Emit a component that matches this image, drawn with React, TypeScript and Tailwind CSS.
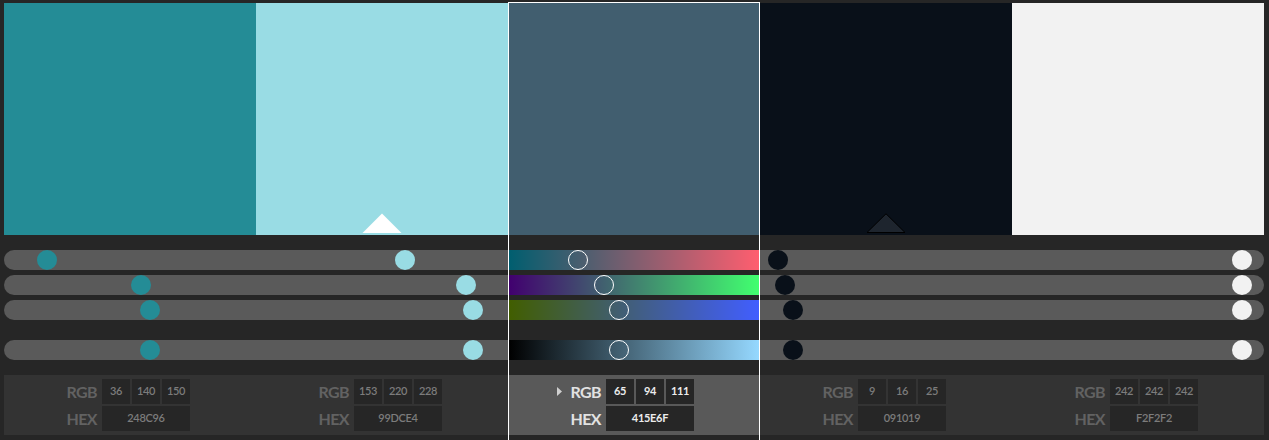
import React from "react";

type Swatch = {
  r: number;
  g: number;
  b: number;
  hex: string;
  mark?: "light" | "dark";
};

const swatches: Swatch[] = [
  { r: 36, g: 140, b: 150, hex: "248C96" },
  { r: 153, g: 220, b: 228, hex: "99DCE4", mark: "light" },
  { r: 65, g: 94, b: 111, hex: "415E6F" },
  { r: 9, g: 16, b: 25, hex: "091019", mark: "dark" },
  { r: 242, g: 242, b: 242, hex: "F2F2F2" },
];

const SELECTED = 2;

const rgb = (r: number, g: number, b: number) => `rgb(${r},${g},${b})`;

function Track({
  value,
  width,
  color,
  selected,
  gradient,
  rounded,
}: {
  value: number;
  width: number;
  color: string;
  selected: boolean;
  gradient: string;
  rounded: string;
}) {
  const left = (value / 255) * (width - 20);
  return (
    <div
      className={`relative h-5 w-full ${selected ? "" : "bg-[#5a5a5a]"} ${rounded}`}
      style={selected ? { background: gradient } : undefined}
    >
      <div
        className={`absolute top-0 h-5 w-5 rounded-full ${
          selected ? "border-[1.5px] border-white" : ""
        }`}
        style={{ left, background: selected ? "transparent" : color }}
      />
    </div>
  );
}

function Column({ s, index }: { s: Swatch; index: number }) {
  const selected = index === SELECTED;
  const width = selected ? 250 : 252;
  const color = rgb(s.r, s.g, s.b);
  const max = Math.max(s.r, s.g, s.b);
  const k = 255 / (max || 1);
  const rounded =
    index === 0 ? "rounded-l-full" : index === swatches.length - 1 ? "rounded-r-full" : "";

  const rows = [
    { v: s.r, g: `linear-gradient(to right, ${rgb(0, s.g, s.b)}, ${rgb(255, s.g, s.b)})` },
    { v: s.g, g: `linear-gradient(to right, ${rgb(s.r, 0, s.b)}, ${rgb(s.r, 255, s.b)})` },
    { v: s.b, g: `linear-gradient(to right, ${rgb(s.r, s.g, 0)}, ${rgb(s.r, s.g, 255)})` },
  ];
  const valueGradient = `linear-gradient(to right, #000, ${rgb(
    Math.round(s.r * k),
    Math.round(s.g * k),
    Math.round(s.b * k)
  )})`;

  const label = selected ? "text-[#e2e2e2]" : "text-[#626262]";
  const box = selected ? "text-[#ececec] font-bold" : "text-[#7c7c7c] font-semibold";

  return (
    <div className={`relative flex w-[252px] flex-col ${selected ? "px-px" : ""}`}>
      <div className="relative h-[232px]" style={{ background: color }}>
        {s.mark && (
          <svg
            className="absolute bottom-[2px] left-1/2 -translate-x-1/2"
            width="40"
            height="20"
            viewBox="0 0 40 20"
          >
            {s.mark === "light" ? (
              <polygon points="20,0.5 39.5,20 0.5,20" fill="#ffffff" />
            ) : (
              <polygon points="20,0.8 39,19.5 1,19.5" fill="#1e252e" stroke="#000" strokeWidth="1" />
            )}
          </svg>
        )}
      </div>

      <div className="mt-[15px] flex flex-col gap-[5px]">
        {rows.map((r, i) => (
          <Track
            key={i}
            value={r.v}
            width={width}
            color={color}
            selected={selected}
            gradient={r.g}
            rounded={rounded}
          />
        ))}
      </div>
      <div className="mt-5">
        <Track
          value={max}
          width={width}
          color={color}
          selected={selected}
          gradient={valueGradient}
          rounded={rounded}
        />
      </div>

      <div
        className={`mt-[15px] flex h-[60px] flex-col gap-[2px] pt-1 ${
          selected ? "bg-[#595959] pl-[46px]" : "bg-[#333333] pl-[47px]"
        }`}
      >
        <div className="flex h-[25px] items-center">
          <div className="flex w-[10px] items-center pl-[2px]">
            {selected && (
              <svg width="5" height="9" viewBox="0 0 5 9">
                <polygon points="0,0 5,4.5 0,9" fill="#cfcfcf" />
              </svg>
            )}
          </div>
          <span className={`w-[36px] text-right text-[16px] font-bold tracking-[-0.6px] ${label}`}>
            RGB
          </span>
          <div className="ml-[5px] flex gap-[2px]">
            {[s.r, s.g, s.b].map((v, i) => (
              <div
                key={i}
                className={`flex h-[25px] w-7 items-center justify-center bg-[#262626] text-[11px] tracking-[-0.3px] ${box}`}
              >
                {v}
              </div>
            ))}
          </div>
        </div>
        <div className="flex h-[25px] items-center">
          <div className="w-[10px]" />
          <span className={`w-[36px] text-right text-[16px] font-bold tracking-[-0.6px] ${label}`}>
            HEX
          </span>
          <div
            className={`ml-[5px] flex h-[25px] w-[88px] items-center justify-center bg-[#262626] text-[11px] tracking-[-0.3px] ${box}`}
          >
            {s.hex}
          </div>
        </div>
      </div>

      {selected && (
        <div className="pointer-events-none absolute -top-px -bottom-px left-0 right-0 border border-white" />
      )}
    </div>
  );
}

export default function App() {
  return (
    <div className="flex h-[440px] w-[1269px] bg-[#262626] pl-1 pr-[5px] pt-[3px] font-['Lato',sans-serif]">
      {swatches.map((s, i) => (
        <Column key={s.hex} s={s} index={i} />
      ))}
    </div>
  );
}
